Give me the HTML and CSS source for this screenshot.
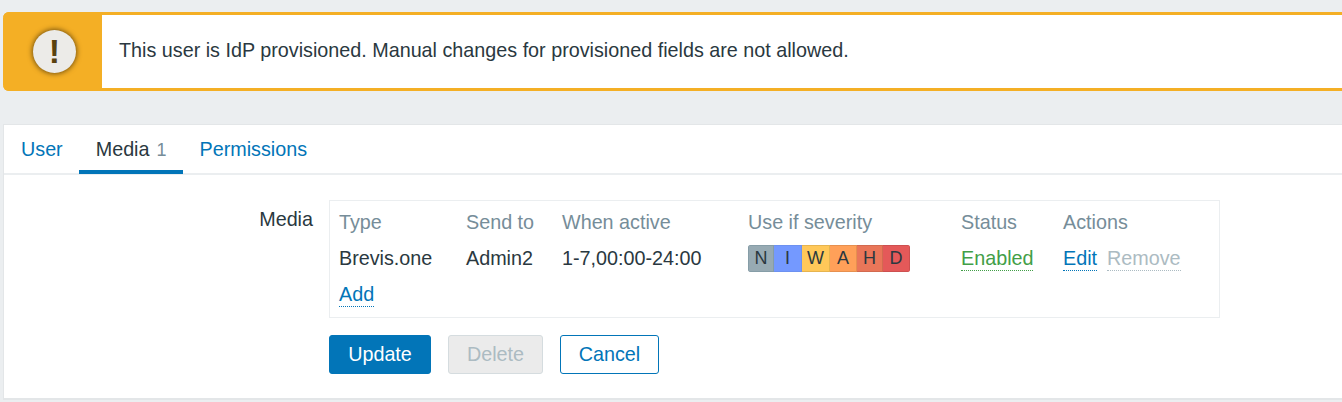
FILE: index.html
```html
<!DOCTYPE html>
<html lang="en">
<head>
<meta charset="utf-8">
<title>User media</title>
<link rel="stylesheet" href="styles.css">
</head>
<body>
<div class="message">
  <div class="message-icon"><span class="circle">!</span></div>
  <div class="message-text">This user is IdP provisioned. Manual changes for provisioned fields are not allowed.</div>
</div>
<div class="panel">
  <nav class="tabs">
    <a class="tab">User</a>
    <a class="tab active">Media<span class="count">1</span></a>
    <a class="tab">Permissions</a>
  </nav>
  <div class="form">
    <div class="label">Media</div>
    <div class="field">
      <div class="media-box">
        <table class="media-table">
          <thead>
            <tr>
              <th class="c-type">Type</th>
              <th class="c-send">Send to</th>
              <th class="c-when">When active</th>
              <th class="c-sev">Use if severity</th>
              <th class="c-status">Status</th>
              <th class="c-actions">Actions</th>
            </tr>
          </thead>
          <tbody>
            <tr>
              <td>Brevis.one</td>
              <td>Admin2</td>
              <td>1-7,00:00-24:00</td>
              <td>
                <div class="severity">
                  <span class="sev s-n">N</span><span class="sev s-i">I</span><span class="sev s-w">W</span><span class="sev s-a">A</span><span class="sev s-h">H</span><span class="sev s-d">D</span>
                </div>
              </td>
              <td><a class="link green">Enabled</a></td>
              <td class="actions"><a class="link">Edit</a><a class="link muted">Remove</a></td>
            </tr>
            <tr>
              <td colspan="6"><a class="link">Add</a></td>
            </tr>
          </tbody>
        </table>
      </div>
      <div class="buttons">
        <button class="btn primary" type="button">Update</button>
        <button class="btn disabled" type="button">Delete</button>
        <button class="btn outline" type="button">Cancel</button>
      </div>
    </div>
  </div>
</div>
</body>
</html>
```
FILE: styles.css
```css
* { box-sizing: border-box; }
html, body { height: 100%; }
body {
  margin: 0;
  padding: 12px 0 0 3px;
  background: #ebeef0;
  color: #2a3840;
  font: 19.76px/24px "Liberation Sans", Arial, sans-serif;
  overflow: hidden;
}
.message {
  display: flex;
  height: 79px;
  background: #fff;
  border: solid #f4af25;
  border-width: 3px 0;
  border-radius: 6px 0 0 6px;
}
.message-icon {
  flex: 0 0 99px;
  margin: -3px 0;
  background: #f4af25;
  border-radius: 6px 0 0 6px;
  display: flex;
  align-items: center;
  justify-content: center;
  padding: 0 0 1px 4px;
}
.circle {
  width: 43px;
  height: 43px;
  border-radius: 50%;
  background: #ecebe8;
  color: #59420f;
  box-shadow: 0 0 5px 1px #7a5510;
  font-weight: 700;
  font-size: 34px;
  line-height: 43px;
  text-align: center;
}
.message-text {
  padding-left: 17px;
  align-self: center;
  margin-top: -4px;
}
.panel {
  margin-top: 33px;
  height: 276px;
  background: #fff;
  border: 1px solid #e3e6e8;
  border-width: 1px 0 2px 1px;
}
.tabs {
  display: flex;
  height: 50px;
  border-bottom: 2px solid #ebeef0;
}
.tab {
  height: 49px;
  padding: 12px 16px 0 17px;
  color: #0275b8;
  border-bottom: 4px solid transparent;
}
.tab.active {
  color: #2a3840;
  border-bottom-color: #0275b8;
}
.count {
  margin-left: 7px;
  color: #768d99;
  font-size: 18px;
}
.form {
  display: flex;
  padding-top: 25px;
}
.label {
  width: 309px;
  padding-top: 7px;
  text-align: right;
}
.field {
  margin-left: 16px;
  width: 891px;
}
.media-box {
  height: 118px;
  padding: 3px 9px;
  border: 1px solid #ebeef0;
}
.media-table {
  border-collapse: collapse;
  table-layout: fixed;
  width: 100%;
}
.media-table th,
.media-table td {
  height: 36px;
  padding: 0;
  text-align: left;
  vertical-align: middle;
  font-weight: 400;
  white-space: nowrap;
}
.media-table th { color: #768d99; }
.c-type { width: 127px; }
.c-send { width: 96px; }
.c-when { width: 186px; }
.c-sev { width: 213px; }
.c-status { width: 102px; }
.link {
  color: #0275b8;
  border-bottom: 1px dotted #0275b8;
  display: inline-block;
  line-height: 23px;
}
.green { color: #429e47; border-bottom-color: #429e47; }
.muted { color: #acbbc2; border-bottom-color: #acbbc2; margin-left: 10px; }
.severity {
  display: flex;
  width: 162px;
  height: 27px;
  border-radius: 3px;
  overflow: hidden;
  font-size: 18px;
  line-height: 25px;
}
.sev {
  text-align: center;
  border: 1px solid;
  border-width: 1px 1px 1px 0;
  color: #2a3840;
}
.s-n { width: 26px; background: #97aab3; border-color: #869da7; border-left-width: 1px; }
.s-i { width: 28px; background: #7499ff; border-color: #6d91f0; }
.s-w { width: 28px; background: #ffc859; border-color: #e6b450; }
.s-a { width: 27px; background: #ffa059; border-color: #e69050; }
.s-h { width: 26px; background: #e97659; border-color: #d26a50; }
.s-d { width: 27px; background: #e45959; border-color: #cd5050; }
.buttons {
  display: flex;
  gap: 17px;
  margin-top: 17px;
}
.btn {
  height: 39px;
  padding: 0;
  border: 1px solid;
  border-radius: 3px;
  font: inherit;
  line-height: 35px;
}
.primary { width: 102px; background: #0275b8; border-color: #0275b8; color: #fff; }
.disabled { width: 95px; background: #ebebeb; border-color: #d5dcdf; color: #acbbc2; }
.outline { width: 99px; background: #fff; border-color: #0275b8; color: #0275b8; }
```
